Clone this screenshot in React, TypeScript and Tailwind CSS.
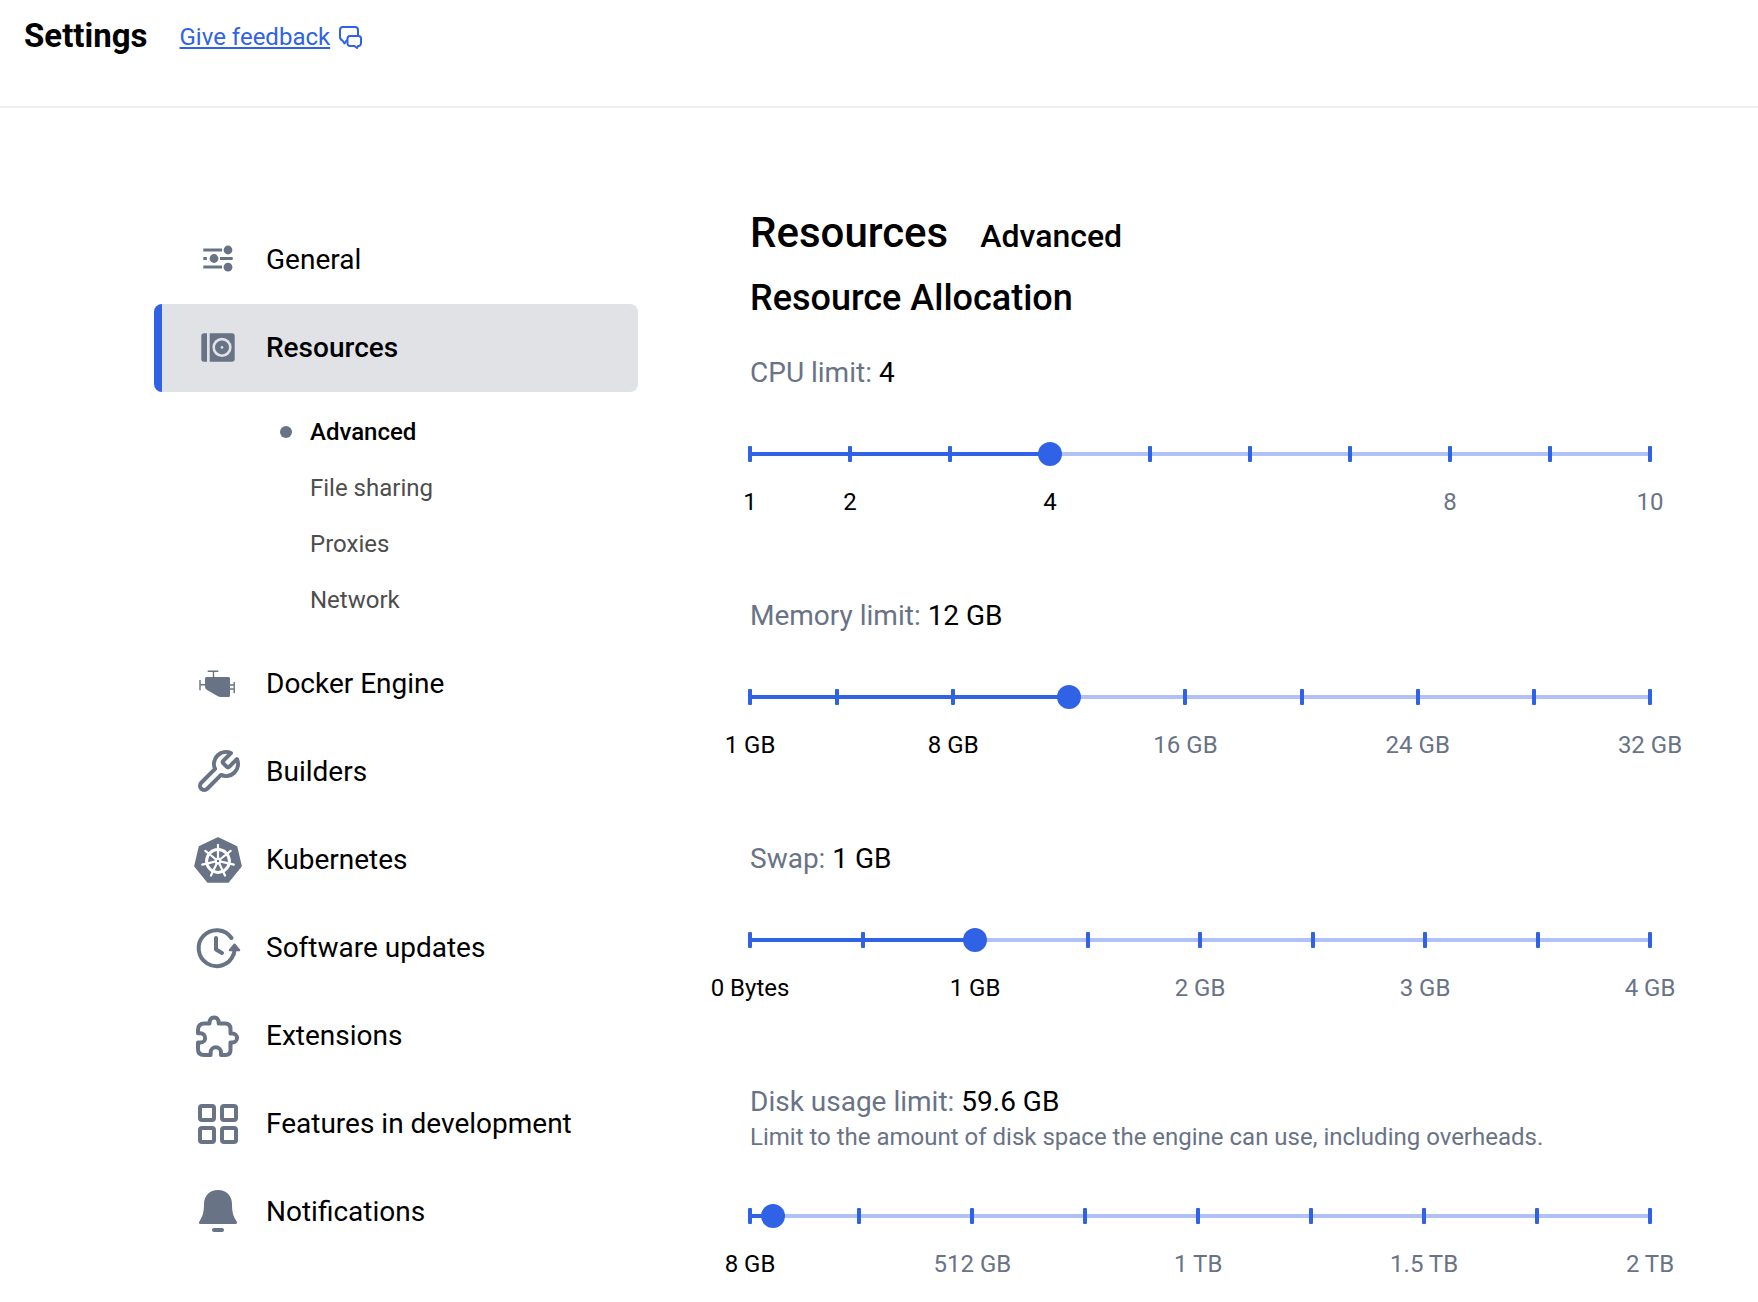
import { useState, type ReactNode } from "react";

type IconProps = { children: ReactNode };

function IconBox({ children }: IconProps) {
  return (
    <svg viewBox="0 0 48 48" className="size-12 shrink-0 text-[#697386]" fill="none" aria-hidden="true">
      {children}
    </svg>
  );
}

const GeneralIcon = () => (
  <IconBox>
    <g stroke="currentColor" strokeWidth="3">
      <path d="M9.3 14H28M9.3 22.5h3.6M26 22.5h12.7M9.3 31H28" />
    </g>
    <g fill="currentColor">
      <circle cx="34" cy="14" r="4.4" />
      <circle cx="20" cy="22.5" r="4.4" />
      <circle cx="34" cy="31.2" r="4.4" />
    </g>
  </IconBox>
);

const ResourcesIcon = () => (
  <IconBox>
    <path d="M10 9.3h3v28.4h-3a2.7 2.7 0 0 1-2.7-2.7V12A2.7 2.7 0 0 1 10 9.3Z" fill="currentColor" />
    <path d="M15.7 9.3H38a2.7 2.7 0 0 1 2.7 2.7v23a2.7 2.7 0 0 1-2.7 2.7H15.7Z" fill="currentColor" />
    <circle cx="28" cy="23.4" r="8.3" stroke="#e1e2e6" strokeWidth="2.6" />
    <circle cx="28" cy="23.4" r="1.3" fill="#e1e2e6" />
  </IconBox>
);

const EngineIcon = () => (
  <IconBox>
    <path
      d="M12.5 17h22a1.5 1.5 0 0 1 1.5 1.5v17a1.5 1.5 0 0 1-1.5 1.5H27q-2 0-4-1.2l-9.5-5.600q-2.5-1.2-2.5-3.2v-8.5A1.5 1.5 0 0 1 12.5 17Z"
      fill="currentColor"
    />
    <path
      d="M13.7 11.2h10.6M19.5 11v6.5M6 20v10.3M6 24.8h5.5M40.2 22v11.3M36 25h4M36 29h4"
      stroke="currentColor"
      strokeWidth="1.4"
    />
  </IconBox>
);

const BuildersIcon = () => (
  <IconBox>
    <path
      d="M29.400 12.600a2 2 0 0 0 0 2.800l3.200 3.200a2 2 0 0 0 2.800 0l7.540-7.540a12 12 0 0 1-15.880 15.880l-13.820 13.820a4.240 4.240 0 0 1-6-6l13.820-13.820a12 12 0 0 1 15.880-15.880l-7.520 7.520z"
      stroke="currentColor"
      strokeWidth="4"
      strokeLinecap="round"
      strokeLinejoin="round"
    />
  </IconBox>
);

const spokes = [0, 1, 2, 3, 4, 5, 6];

const KubernetesIcon = () => (
  <IconBox>
    <path
      d="M24 2.200 42.300 10.800 46.800 30 34 45.800H14L1.200 30 5.700 10.800Z"
      fill="currentColor"
      stroke="currentColor"
      strokeWidth="2"
      strokeLinejoin="round"
    />
    <circle cx="24" cy="25" r="11.400" stroke="white" strokeWidth="3" />
    <circle cx="24" cy="25" r="3.400" fill="white" />
    {spokes.map((n) => (
      <path
        key={n}
        d="M24 23V8.800"
        stroke="white"
        strokeWidth="2.200"
        strokeLinecap="round"
        transform={`rotate(${(n * 360) / 7} 24 25)`}
      />
    ))}
    <circle cx="24" cy="25" r="1.200" fill="currentColor" />
  </IconBox>
);

const UpdatesIcon = () => (
  <IconBox>
    <g stroke="currentColor" strokeWidth="4" strokeLinecap="round" strokeLinejoin="round">
      <path d="M37.500 14A18 18 0 1 0 39.500 30.500" />
      <path d="M22 14v11.500l6 3.500" />
    </g>
    <path d="M39.500 30.500q1-2.500 1-5" stroke="currentColor" strokeWidth="4" />
    <path
      d="m40.500 20.500 4.800 5.700h-9.600Z"
      fill="currentColor"
      stroke="currentColor"
      strokeWidth="2"
      strokeLinejoin="round"
    />
  </IconBox>
);

const ExtensionsIcon = () => (
  <IconBox>
    <path
      d="M15.500 11.500c0-1 .1-2 .3-3a4.600 4.600 0 0 1 8.600 0c.2 1 .3 2 .3 3H31q5.500 0 5.500 5.500v4.500h2a4.500 4.500 0 0 1 0 9h-2V38q0 5-5 5h-4.500v-2.500a5.200 5.200 0 0 0-10.400 0V43H10q-6 0-6-6v-6.500h2.500a4.600 4.600 0 0 0 0-9.200H4V18q0-6.500 6.500-6.500Z"
      stroke="currentColor"
      strokeWidth="4"
      strokeLinejoin="round"
    />
  </IconBox>
);

const FeaturesIcon = () => (
  <IconBox>
    <g stroke="currentColor" strokeWidth="4">
      <rect x="6" y="6" width="14" height="14" rx="2" />
      <rect x="28" y="6" width="14" height="14" rx="2" />
      <rect x="6" y="28" width="14" height="14" rx="2" />
      <rect x="28" y="28" width="14" height="14" rx="2" />
    </g>
  </IconBox>
);

const NotificationsIcon = () => (
  <IconBox>
    <path
      d="M24 2c-8.500 0-14 6-14 14 0 7.500-1 12-4.500 17.200C4.300 35 5 36 6.500 36h35c1.500 0 2.200-1 1-2.800C39 28 38 23.500 38 16c0-8-5.500-14-14-14Z"
      fill="currentColor"
    />
    <path d="M20 42h8" stroke="currentColor" strokeWidth="4" strokeLinecap="round" />
  </IconBox>
);

const FeedbackIcon = () => (
  <svg
    viewBox="0 0 24 24"
    className="size-6"
    fill="none"
    stroke="currentColor"
    strokeWidth="2"
    strokeLinejoin="round"
    aria-hidden="true"
  >
    <path d="M10 15.500H8.500L6.500 18.500l-2-3Q2 14.500 2 12V5a3 3 0 0 1 3-3h12a3 3 0 0 1 3 3v5" />
    <path d="M12 11h8.500a2.500 2.500 0 0 1 2.500 2.500v5a2.500 2.500 0 0 1-2.500 2.500H20l-1 2-2.500-2H12a2.500 2.500 0 0 1-2.500-2.500v-5A2.500 2.500 0 0 1 12 11Z" />
  </svg>
);

const subItems = ["Advanced", "File sharing", "Proxies", "Network"];

type NavItem = { label: string; Icon: () => ReactNode; children?: string[] };

const navItems: NavItem[] = [
  { label: "General", Icon: GeneralIcon },
  { label: "Resources", Icon: ResourcesIcon, children: subItems },
  { label: "Docker Engine", Icon: EngineIcon },
  { label: "Builders", Icon: BuildersIcon },
  { label: "Kubernetes", Icon: KubernetesIcon },
  { label: "Software updates", Icon: UpdatesIcon },
  { label: "Extensions", Icon: ExtensionsIcon },
  { label: "Features in development", Icon: FeaturesIcon },
  { label: "Notifications", Icon: NotificationsIcon },
];

function Sidebar() {
  return (
    <nav aria-label="Settings sections" className="w-[484px] shrink-0 pt-[108px]">
      <ul>
        {navItems.map(({ label, Icon, children }) => (
          <li key={label}>
            <a
              href="#"
              aria-current={children ? "page" : undefined}
              className={
                children
                  ? "flex h-[88px] items-center gap-6 rounded-lg border-l-8 border-[#3062e6] bg-[#e1e2e6] pl-8 text-[28px] font-medium"
                  : "flex h-[88px] items-center gap-6 border-l-8 border-transparent pl-8 text-[28px]"
              }
            >
              <Icon />
              {label}
            </a>
            {children && (
              <ul className="py-3 pl-[126px]">
                {children.map((child, i) => (
                  <li key={child}>
                    <a
                      href="#"
                      className={
                        i === 0
                          ? "flex h-14 items-center gap-[18px] text-2xl font-medium"
                          : "flex h-14 items-center gap-[18px] text-2xl text-[#4d4d4d]"
                      }
                    >
                      <span className={i === 0 ? "size-3 rounded-full bg-[#697386]" : "size-3"} />
                      {child}
                    </a>
                  </li>
                ))}
              </ul>
            )}
          </li>
        ))}
      </ul>
    </nav>
  );
}

type Limit = {
  id: string;
  label: string;
  note?: string;
  min: number;
  max: number;
  step: number;
  initial: number;
  ticks: number[];
  marks: { at: number; text: string }[];
  format: (v: number) => string;
};

const gb = (v: number) => `${v} GB`;

const limits: Limit[] = [
  {
    id: "cpu",
    label: "CPU limit:",
    min: 1,
    max: 10,
    step: 1,
    initial: 4,
    ticks: [1, 2, 3, 4, 5, 6, 7, 8, 9, 10],
    marks: [1, 2, 4, 8, 10].map((n) => ({ at: n, text: String(n) })),
    format: String,
  },
  {
    id: "memory",
    label: "Memory limit:",
    min: 1,
    max: 32,
    step: 1,
    initial: 12,
    ticks: [1, 4, 8, 12, 16, 20, 24, 28, 32],
    marks: [1, 8, 16, 24, 32].map((n) => ({ at: n, text: gb(n) })),
    format: gb,
  },
  {
    id: "swap",
    label: "Swap:",
    min: 0,
    max: 4,
    step: 0.5,
    initial: 1,
    ticks: [0, 0.5, 1, 1.5, 2, 2.5, 3, 3.5, 4],
    marks: [0, 1, 2, 3, 4].map((n) => ({ at: n, text: n === 0 ? "0 Bytes" : gb(n) })),
    format: gb,
  },
  {
    id: "disk",
    label: "Disk usage limit:",
    note: "Limit to the amount of disk space the engine can use, including overheads.",
    min: 8,
    max: 2048,
    step: 0.1,
    initial: 59.6,
    ticks: [8, 256, 512, 768, 1024, 1280, 1536, 1792, 2048],
    marks: [
      { at: 8, text: "8 GB" },
      { at: 512, text: "512 GB" },
      { at: 1024, text: "1 TB" },
      { at: 1536, text: "1.5 TB" },
      { at: 2048, text: "2 TB" },
    ],
    format: gb,
  },
];

function LimitSlider({ limit }: { limit: Limit }) {
  const [value, setValue] = useState(limit.initial);
  const percent = (v: number) => `${((v - limit.min) / (limit.max - limit.min)) * 100}%`;

  return (
    <section>
      <label htmlFor={limit.id} className="block text-[28px] leading-[38px] text-[#697386]">
        {limit.label} <span className="text-black">{limit.format(value)}</span>
      </label>
      {limit.note && <p className="text-2xl leading-[33px] text-[#697386]">{limit.note}</p>}
      <div className="relative mt-[50px] flex h-6 items-center">
        <div className="h-1 w-full bg-[#afc1f5]">
          <div className="h-full bg-[#3062e6]" style={{ width: percent(value) }} />
        </div>
        {limit.ticks.map((t) => (
          <span
            key={t}
            className="absolute top-1 h-4 w-1 -translate-x-1/2 rounded-[1px] bg-[#3062e6]"
            style={{ left: percent(t) }}
          />
        ))}
        <input
          id={limit.id}
          type="range"
          min={limit.min}
          max={limit.max}
          step={limit.step}
          value={value}
          onChange={(e) => setValue(Number(e.target.value))}
          className="absolute inset-y-0 -left-3 h-6 w-[calc(100%+24px)] cursor-pointer appearance-none bg-transparent [&::-webkit-slider-thumb]:size-6 [&::-webkit-slider-thumb]:appearance-none [&::-webkit-slider-thumb]:rounded-full [&::-webkit-slider-thumb]:bg-[#3062e6]"
        />
      </div>
      <div className="relative mt-5 h-8 text-2xl leading-8">
        {limit.marks.map((m) => (
          <span
            key={m.at}
            className={
              m.at <= value
                ? "absolute -translate-x-1/2 whitespace-nowrap text-black"
                : "absolute -translate-x-1/2 whitespace-nowrap text-[#697386]"
            }
            style={{ left: percent(m.at) }}
          >
            {m.text}
          </span>
        ))}
      </div>
    </section>
  );
}

export default function App() {
  return (
    <div className="min-h-screen bg-white font-['Roboto',sans-serif] text-black">
      <header className="flex h-[108px] items-start gap-8 border-b-2 border-[#efeff1] px-6 pt-4">
        <h1 className="text-[33px] leading-10 font-bold">Settings</h1>
        <a href="#" className="flex items-center gap-2 text-2xl leading-[42px] text-[#3062e6]">
          <span className="underline underline-offset-2">Give feedback</span>
          <FeedbackIcon />
        </a>
      </header>
      <div className="flex gap-28 pr-[108px] pl-[154px]">
        <Sidebar />
        <main className="min-w-0 flex-1 pt-[100px]">
          <div className="flex items-baseline gap-8">
            <h2 className="text-[42px] leading-[50px] font-medium">Resources</h2>
            <span className="text-[32px] leading-10 font-medium">Advanced</span>
          </div>
          <h3 className="mt-[18px] text-4xl leading-[44px] font-medium">Resource Allocation</h3>
          <div className="mt-[34px] flex flex-col gap-[79px]">
            {limits.map((limit) => (
              <LimitSlider key={limit.id} limit={limit} />
            ))}
          </div>
        </main>
      </div>
    </div>
  );
}
